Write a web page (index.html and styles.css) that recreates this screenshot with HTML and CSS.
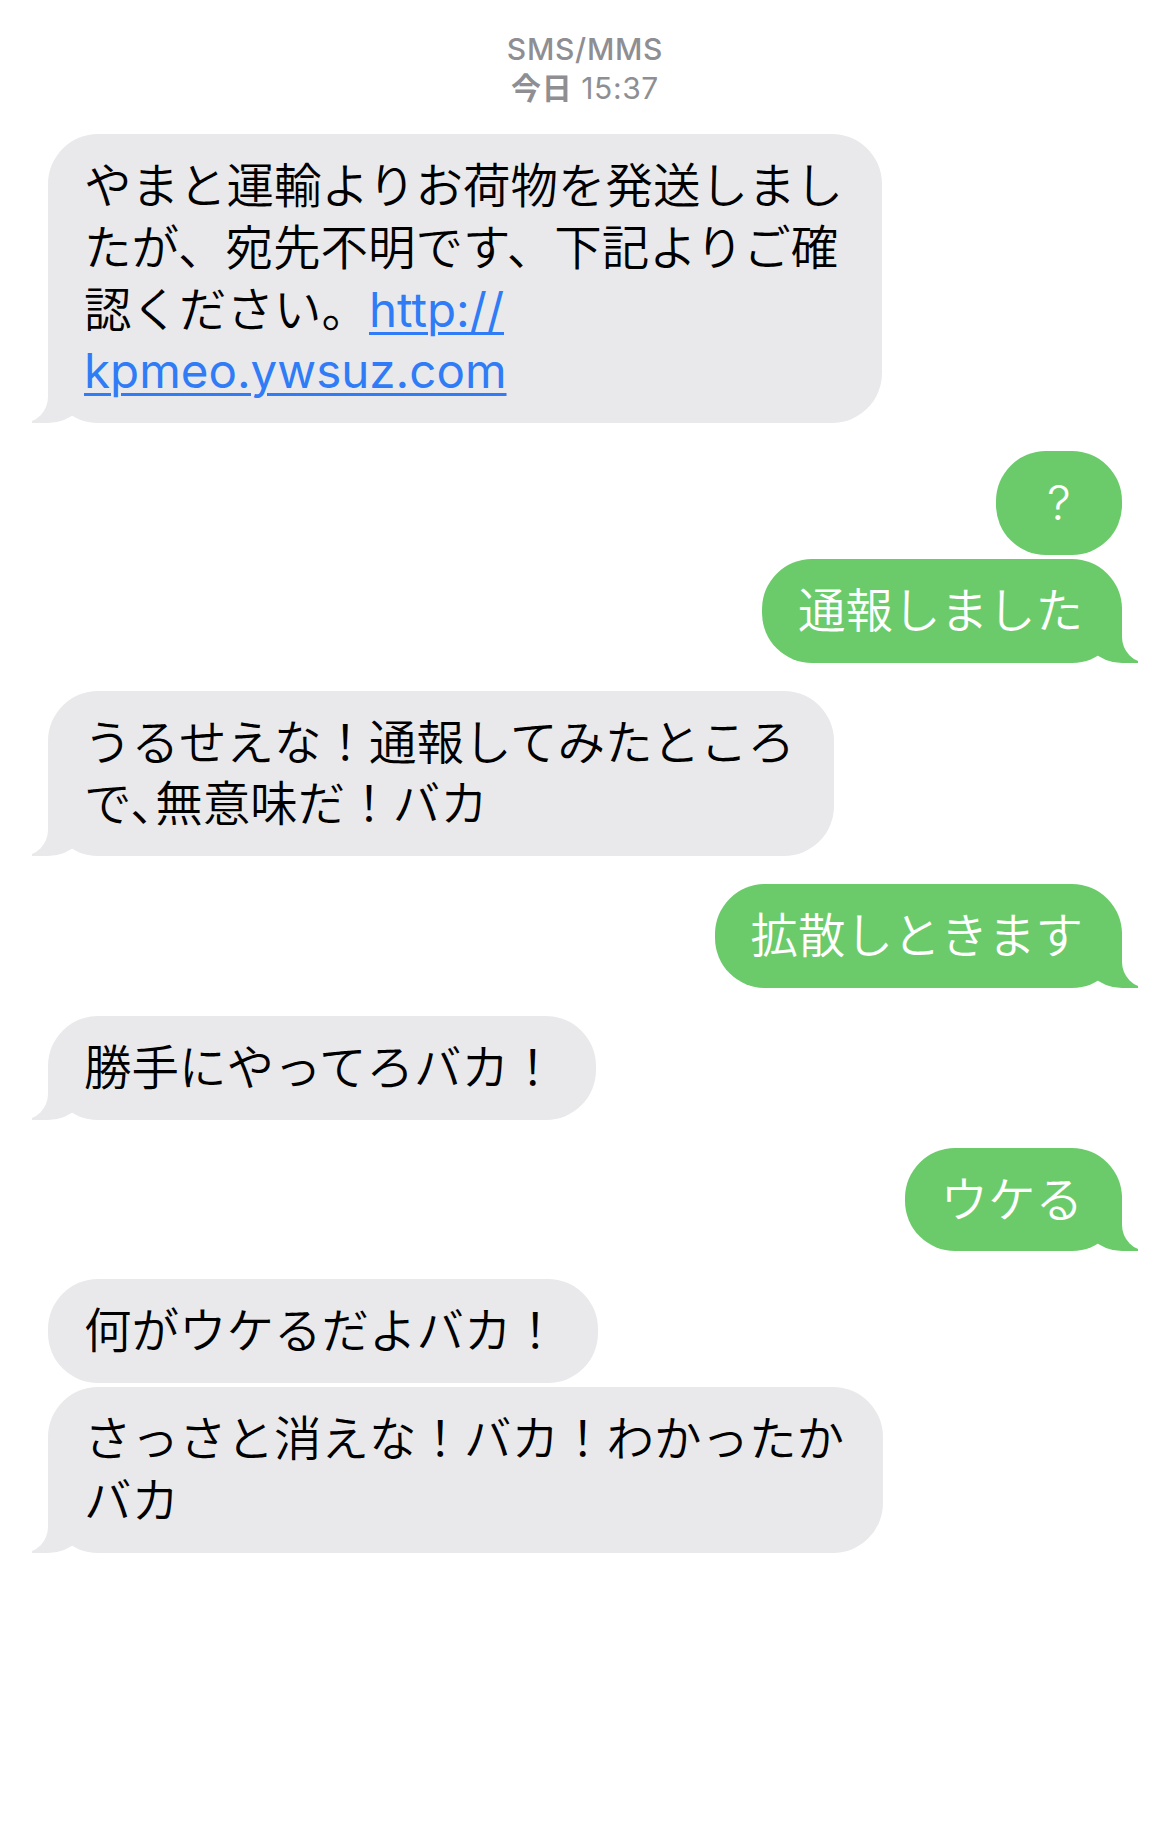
FILE: index.html
```html
<!DOCTYPE html>
<html lang="ja">
<head>
<meta charset="utf-8">
<title>SMS/MMS</title>
<link rel="stylesheet" href="styles.css">
</head>
<body>
<main class="thread">
  <header class="meta">
    <div class="meta-service">SMS/MMS</div>
    <div class="meta-time"><span class="meta-day">今日</span> 15:37</div>
  </header>

  <div class="group recv">
    <div class="bubble recv-bubble tail">やまと運輸よりお荷物を発送しまし<br>たが、宛先不明です、下記よりご確<br>認ください。<a class="link" href="#">http://<br>kpmeo.ywsuz.com</a></div>
  </div>

  <div class="group sent">
    <div class="bubble sent-bubble round">?</div>
    <div class="bubble sent-bubble tail">通報しました</div>
  </div>

  <div class="group recv">
    <div class="bubble recv-bubble tail">うるせえな！通報してみたところ<br>で､無意味だ！バカ</div>
  </div>

  <div class="group sent">
    <div class="bubble sent-bubble tail">拡散しときます</div>
  </div>

  <div class="group recv">
    <div class="bubble recv-bubble tail">勝手にやってろバカ！</div>
  </div>

  <div class="group sent">
    <div class="bubble sent-bubble tail">ウケる</div>
  </div>

  <div class="group recv">
    <div class="bubble recv-bubble">何がウケるだよバカ！</div>
    <div class="bubble recv-bubble tail">さっさと消えな！バカ！わかったか<br>バカ</div>
  </div>
</main>
</body>
</html>
```

FILE: styles.css
```css
* {
  box-sizing: border-box;
}

html,
body {
  margin: 0;
  padding: 0;
  background: #ffffff;
}

body {
  font-family: "Inter", "Noto Sans CJK JP", sans-serif;
  color: #000000;
}

.thread {
  display: flex;
  flex-direction: column;
  gap: 28px;
  padding: 28px 48px 40px;
}

.meta {
  text-align: center;
  color: #8e8e93;
  font-size: 30px;
  line-height: 39px;
  padding-top: 2px;
  margin-bottom: -2px;
}

.meta-service {
  font-weight: 500;
  letter-spacing: 0.7px;
}

.meta-time {
  font-weight: 400;
  letter-spacing: 0.6px;
}

.meta-day {
  font-weight: 700;
}

.group {
  display: flex;
  flex-direction: column;
  gap: 4px;
}

.group.recv {
  align-items: flex-start;
}

.group.sent {
  align-items: flex-end;
}

.bubble {
  position: relative;
  z-index: 0;
  max-width: 860px;
  padding: 21px 39px 21px 36px;
  border-radius: 50px;
  font-family: "Inter", "Noto Sans CJK JP", sans-serif;
  font-size: 47.5px;
  line-height: 61.75px;
  font-weight: 350;
}

.recv-bubble {
  background: #e9e9eb;
  color: #000000;
}

.sent-bubble {
  background: #6bcb6b;
  color: #ffffff;
}

.round {
  min-width: 126px;
  text-align: center;
  padding-left: 20px;
  padding-right: 20px;
}

.tail::before,
.tail::after {
  content: "";
  position: absolute;
  bottom: 0;
  height: 56px;
  z-index: -1;
}

.recv-bubble.tail::before {
  left: -16px;
  width: 58px;
  background: #e9e9eb;
  border-bottom-right-radius: 42px 40px;
}

.recv-bubble.tail::after {
  left: -26px;
  width: 26px;
  background: #ffffff;
  border-bottom-right-radius: 26px;
}

.sent-bubble.tail::before {
  right: -16px;
  width: 58px;
  background: #6bcb6b;
  border-bottom-left-radius: 42px 40px;
}

.sent-bubble.tail::after {
  right: -26px;
  width: 26px;
  background: #ffffff;
  border-bottom-left-radius: 26px;
}

.link {
  color: #2f7cf6;
  font-weight: 400;
  text-decoration: underline;
  text-decoration-thickness: 3px;
  text-underline-offset: 5px;
}
```
